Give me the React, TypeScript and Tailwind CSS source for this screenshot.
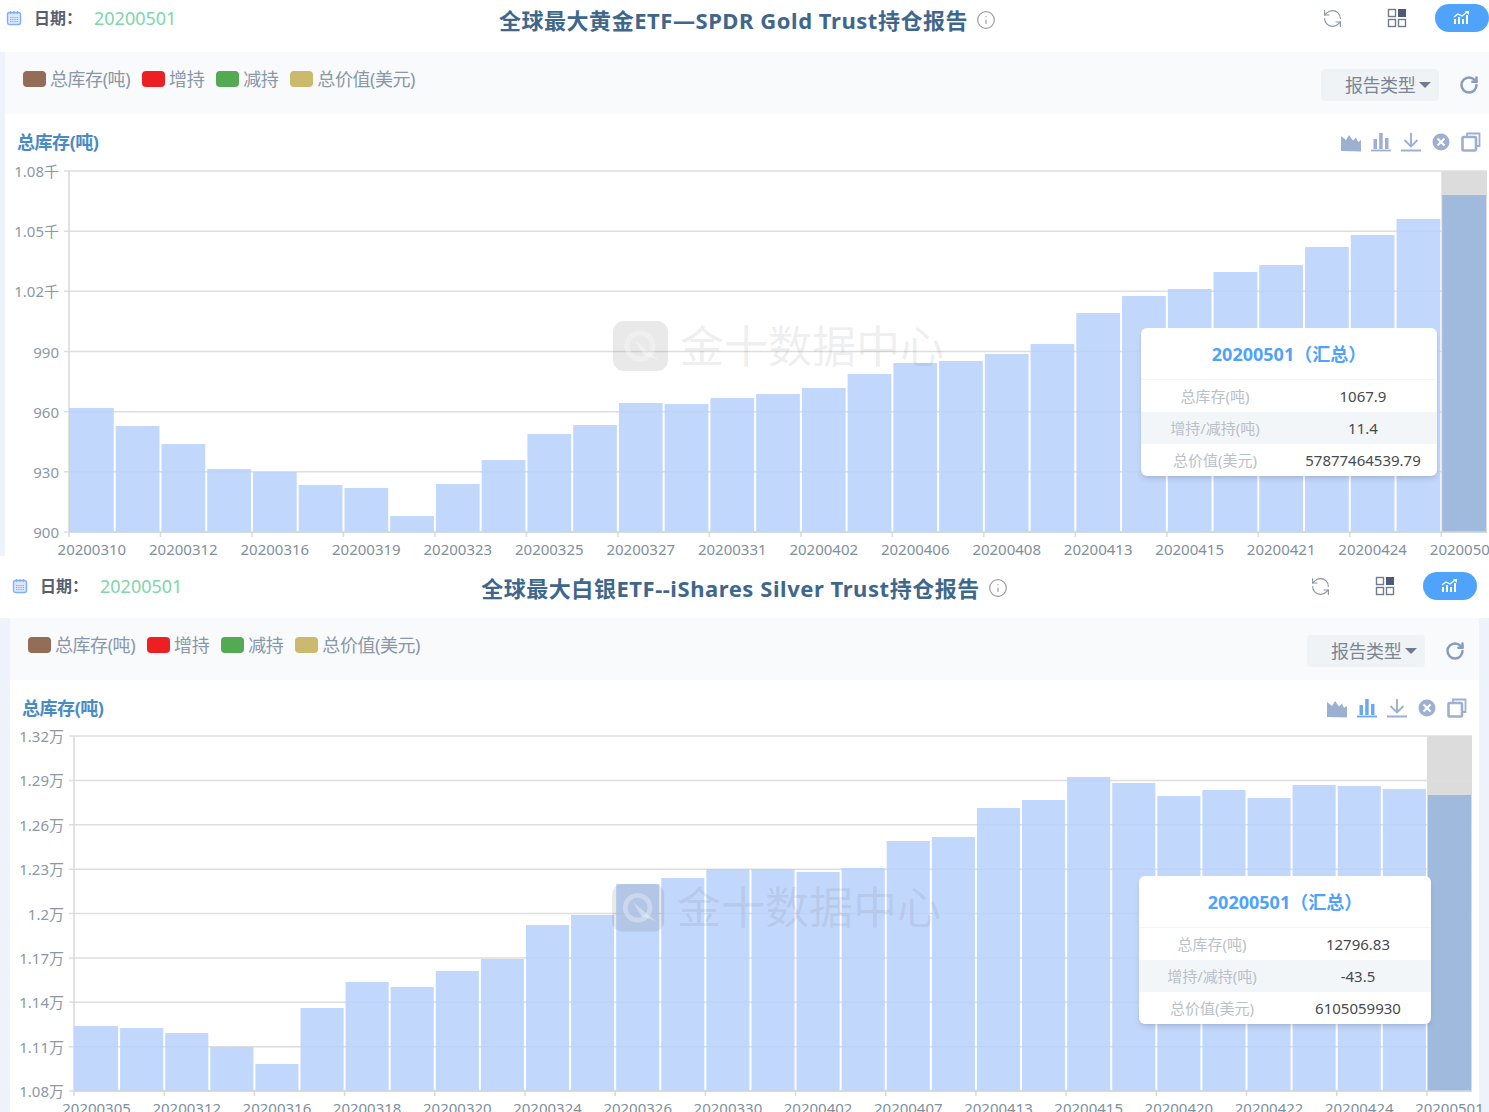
import { Info, RefreshCcw, RotateCw } from "lucide-react";

type ChartCfg = {
  box: string;
  width: number;
  height: number;
  left: number;
  right: number;
  top: number;
  bottom: number;
  labelEnd: number;
  yLabels: string[];
  xLabels: string[];
  tops: number[];
  mark: { x: number; y: number; s: number; tx: number; ty: number; fs: number };
};

const FONT = "font-['Noto_Sans','Noto_Sans_CJK_SC',sans-serif]";

function CalendarIcon() {
  return (
    <svg viewBox="0 0 16 16" className="w-4 h-4 shrink-0">
      <rect x="1.5" y="2.5" width="13" height="12" rx="2" fill="#dbe8ff" stroke="#7fb0ff" strokeWidth="1.4" />
      <path d="M4.5 1v3M8 1v3M11.5 1v3" stroke="#7fb0ff" strokeWidth="1.3" />
      <path d="M4 7.5h8M4 9.5h8M4 11.5h8" stroke="#7fb0ff" strokeWidth="1" strokeDasharray="1.4 .8" />
    </svg>
  );
}

function GridIcon() {
  return (
    <svg viewBox="0 0 20 20" className="w-5 h-5 ml-11">
      <rect x="1.5" y="1.5" width="7" height="7" fill="none" stroke="#737c8f" strokeWidth="1.4" />
      <rect x="11" y="1" width="8" height="8" fill="#4a5a78" />
      <rect x="1.5" y="11.5" width="7" height="7" fill="none" stroke="#737c8f" strokeWidth="1.4" />
      <rect x="11.5" y="11.5" width="7" height="7" fill="none" stroke="#737c8f" strokeWidth="1.4" />
    </svg>
  );
}

function TrendIcon() {
  return (
    <svg viewBox="0 0 18 14" className="w-4.5 h-3.5">
      <path d="M1 8h2v5H1zM5 6h2v7H5zM9 8h2v5H9zM13 4h2v9h-2z" fill="#fff" />
      <path d="M1 6l4-3 4 2 5-4" fill="none" stroke="#fff" strokeWidth="1.2" />
      <path d="M12 0h4v4z" fill="#fff" />
    </svg>
  );
}

function ToolIcons({ active }: { active?: boolean }) {
  const c = "#9db0d0";
  const bar = active ? "#6aa8f0" : c;
  return (
    <div className="flex items-center gap-2.5">
      <svg viewBox="0 0 20 20" className="w-5 h-5">
        <path d="M0 19V4l5 4 3-5 4 5.500 3-3 2 4.500 3-2v11.500z" fill={c} />
      </svg>
      <svg viewBox="0 0 20 20" className="w-5 h-5">
        <path d="M2.500 7h3.500v10H2.500zM8.200 1h3.500v16H8.200zM14 6h3.500v11H14z" fill={bar} />
        <path d="M0 18.500h20" stroke={bar} strokeWidth="1.800" />
      </svg>
      <svg viewBox="0 0 20 20" className="w-5 h-5">
        <path d="M10 1v13M3.500 8l6.500 6.500L16.500 8M0 18.500h20" fill="none" stroke={c} strokeWidth="1.900" />
      </svg>
      <svg viewBox="0 0 20 20" className="w-5 h-5">
        <circle cx="10" cy="10" r="8.500" fill={c} />
        <path d="M6.500 6.500l7 7M13.500 6.500l-7 7" stroke="#fff" strokeWidth="2" />
      </svg>
      <svg viewBox="0 0 20 20" className="w-5 h-5">
        <path d="M6 4.500V1.500h12.500v12.500h-3" fill="none" stroke={c} strokeWidth="1.800" />
        <rect x="1.500" y="5" width="13.500" height="13.500" rx="1" fill="none" stroke={c} strokeWidth="2.600" />
      </svg>
    </div>
  );
}

function Legend() {
  const items: [string, string][] = [
    ["总库存(吨)", "bg-[#946d58]"],
    ["增持", "bg-[#ec1f23]"],
    ["减持", "bg-[#54a953]"],
    ["总价值(美元)", "bg-[#cbb96d]"],
  ];
  return (
    <div className="flex items-center gap-3 -mt-2 text-lg tracking-tight text-[#8a97a8]">
      {items.map(([t, c]) => (
        <div key={t} className="flex items-center gap-1">
          <span className={`w-[23px] h-4 rounded ${c}`} />
          <span>{t}</span>
        </div>
      ))}
    </div>
  );
}

function Chart({ cfg }: { cfg: ChartCfg }) {
  const { left, right, top, bottom, tops, yLabels, xLabels, mark } = cfg;
  const step = (right - left) / tops.length;
  const rowGap = (bottom - top) / (yLabels.length - 1);
  const lastX = left + step * (tops.length - 1);
  return (
    <svg viewBox={cfg.box} width={cfg.width} height={cfg.height} className="block overflow-visible">
      <rect x={lastX} y={top} width={step} height={bottom - top} fill="#dcdcdc" />
      {yLabels.map((l, i) => {
        const y = top + rowGap * i;
        return (
          <g key={l}>
            <line x1={left - 5} x2={right} y1={y} y2={y} stroke="#dedede" strokeWidth="1.500" />
            <text x={cfg.labelEnd} y={y + 6} textAnchor="end" fontSize="15" fill="#8b98a5">
              {l}
            </text>
          </g>
        );
      })}
      <line x1={left} x2={left} y1={top} y2={bottom} stroke="#d9d9d9" strokeWidth="1.500" />
      {tops.map((t, i) => {
        const last = i === tops.length - 1;
        return (
          <rect
            key={i}
            x={left + step * i + (i ? 1 : 0)}
            y={t}
            width={step - (i ? 2 : 1)}
            height={bottom - t}
            fill={last ? "#9ab6dc" : "#b8d0fb"}
            fillOpacity={last ? 0.92 : 0.86}
          />
        );
      })}
      <line x1={left} x2={right} y1={bottom} y2={bottom} stroke="#cbd6e6" strokeWidth="1.500" />
      {xLabels.map((l, i) => {
        const x = left + step * 2 * i;
        return (
          <g key={l}>
            <line x1={x} x2={x} y1={bottom} y2={bottom + 5} stroke="#d9d9d9" strokeWidth="1.500" />
            <text x={x + step / 2} y={bottom + 23} textAnchor="middle" fontSize="15" fill="#80909c">
              {l}
            </text>
          </g>
        );
      })}
      <g transform={`translate(${mark.x} ${mark.y}) scale(${mark.s})`}>
        <rect width="55" height="50" rx="11" fill="#555" fillOpacity="0.13" />
        <circle cx="27" cy="25" r="13" fill="none" stroke="#fff" strokeOpacity="0.3" strokeWidth="5" />
        <path d="M22 19l24 20-15-5z" fill="#fff" fillOpacity="0.35" />
      </g>
      <text x={mark.tx} y={mark.ty} fontSize={mark.fs} fill="#555" fillOpacity="0.11">
        金十数据中心
      </text>
    </svg>
  );
}

function Tooltip({ rows, className }: { rows: string[]; className: string }) {
  const labels = ["总库存(吨)", "增持/减持(吨)", "总价值(美元)"];
  return (
    <div className={`absolute bg-white rounded-md shadow-md ${className}`}>
      <div className="h-13 flex items-center justify-center border-b border-gray-100 text-lg font-bold text-[#4fa3fb]">
        20200501（汇总）
      </div>
      {rows.map((v, i) => (
        <div key={i} className={`h-8 grid grid-cols-2 items-center text-center text-[15px] ${i === 1 ? "bg-[#f3f6f9]" : ""}`}>
          <span className="text-[#b9c0c9]">{labels[i]}</span>
          <span className="text-[#454a50]">{v}</span>
        </div>
      ))}
    </div>
  );
}

function Panel({
  title,
  cfg,
  rows,
  second,
}: {
  title: string;
  cfg: ChartCfg;
  rows: string[];
  second?: boolean;
}) {
  return (
    <section className="flex flex-col">
      <header className={`flex items-start ${second ? "h-15.5 pt-5 px-3" : "h-13 pt-2 pl-1.5"}`}>
        <div className="flex-1 flex items-center gap-3 -mt-1">
          <CalendarIcon />
          <span className="text-base font-bold text-[#58606e] whitespace-nowrap">日期：</span>
          <span className="text-lg text-[#7ed6a9]">20200501</span>
        </div>
        <div className="flex items-center gap-2 whitespace-nowrap -mt-0.5">
          <h1 className="text-[22px] leading-7 font-bold tracking-wide text-[#3f678c]">{title}</h1>
          <Info size={20} strokeWidth={1.5} className="text-[#a0a0a0]" />
        </div>
        <div className="flex-1 flex items-center justify-end -mt-1">
          <RefreshCcw size={21} strokeWidth={1.25} className="text-[#8a919f]" />
          <GridIcon />
          <div className="ml-7 w-13.5 h-7 rounded-full bg-[#4fa3fb] flex items-center justify-center">
            <TrendIcon />
          </div>
        </div>
      </header>
      <div className={`flex-1 flex flex-col border-[#eef2fa] ${second ? "border-x-10" : "border-l-5"}`}>
        <div className={`h-15.5 bg-slate-50 flex items-center justify-between pl-4.5 ${second ? "pr-3.5" : "pr-2.5"}`}>
          <Legend />
          <div className="flex items-center gap-5 mt-1">
            <div className="flex items-center gap-1 w-[118px] h-8 pl-6 rounded-sm bg-[#eff3f6] text-lg tracking-tight text-[#7b8694]">
              <span className="whitespace-nowrap">报告类型</span>
              <svg viewBox="0 0 12 6" className="w-3 h-1.5">
                <path d="M0 0h12L6 6z" fill="#6f7c8f" />
              </svg>
            </div>
            <RotateCw size={20} strokeWidth={3} className="text-[#8a9dbb]" />
          </div>
        </div>
        <div className={`flex items-center justify-between pt-3.5 pl-3 ${second ? "pr-3" : "pr-2"}`}>
          <span className="text-lg tracking-tight font-bold text-[#4a8bc4]">总库存(吨)</span>
          <ToolIcons active={second} />
        </div>
        <div className="relative">
          <Chart cfg={cfg} />
          <Tooltip rows={rows} className={second ? "right-12 top-38.5 w-73" : "right-13 top-43 w-74"} />
        </div>
      </div>
    </section>
  );
}

const goldCfg: ChartCfg = {
  box: "5 156 1484 400",
  width: 1484,
  height: 400,
  left: 69,
  right: 1487,
  top: 171,
  bottom: 532,
  labelEnd: 59,
  yLabels: ["1.08千", "1.05千", "1.02千", "990", "960", "930", "900"],
  xLabels: ["20200310", "20200312", "20200316", "20200319", "20200323", "20200325", "20200327", "20200331", "20200402", "20200406", "20200408", "20200413", "20200415", "20200421", "20200424", "20200501"],
  tops: [408, 426, 444, 469, 472, 485, 488, 516, 484, 460, 434, 425, 403, 404, 398, 394, 388, 374, 363, 361, 354, 344, 313, 296, 289, 272, 265, 247, 235, 219, 195],
  mark: { x: 613, y: 321, s: 1, tx: 680, ty: 363, fs: 44 },
};

const silverCfg: ChartCfg = {
  box: "10 722 1469 390",
  width: 1469,
  height: 390,
  left: 74,
  right: 1472,
  top: 736,
  bottom: 1091,
  labelEnd: 64,
  yLabels: ["1.32万", "1.29万", "1.26万", "1.23万", "1.2万", "1.17万", "1.14万", "1.11万", "1.08万"],
  xLabels: ["20200305", "20200312", "20200316", "20200318", "20200320", "20200324", "20200326", "20200330", "20200402", "20200407", "20200413", "20200415", "20200420", "20200422", "20200424", "20200501"],
  tops: [1026, 1028, 1033, 1047, 1064, 1008, 982, 987, 971, 959, 925, 915, 884, 878, 869, 869, 872, 868, 841, 837, 808, 800, 777, 783, 796, 790, 798, 785, 786, 789, 795],
  mark: { x: 612, y: 884, s: 0.95, tx: 677, ty: 924, fs: 44 },
};

export default function App() {
  return (
    <div className={`w-full h-screen overflow-hidden bg-white flex flex-col ${FONT}`}>
      <Panel title="全球最大黄金ETF—SPDR Gold Trust持仓报告" cfg={goldCfg} rows={["1067.9", "11.4", "57877464539.79"]} />
      <Panel second title="全球最大白银ETF--iShares Silver Trust持仓报告" cfg={silverCfg} rows={["12796.83", "-43.5", "6105059930"]} />
    </div>
  );
}
